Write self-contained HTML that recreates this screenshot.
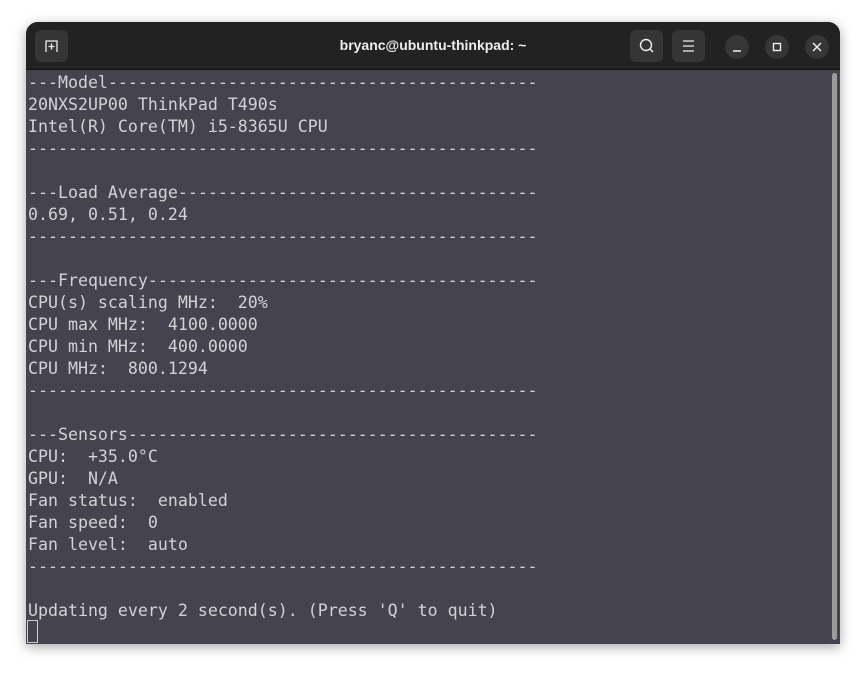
<!DOCTYPE html>
<html><head><style>
body{margin:0;width:866px;height:673px;background:#fff;position:relative;overflow:hidden}
.win{position:absolute;left:26px;top:22px;width:814px;height:622px;border-radius:12px 12px 0 0;overflow:hidden;box-shadow:0 3px 12px rgba(0,0,0,.35);background:#45434e}
.hdr{position:absolute;left:0;top:0;width:814px;height:47px;background:#222222;border-bottom:1px solid #111}
.title{position:absolute;left:0;width:814px;top:15px;text-align:center;color:#eee;font:bold 14px "Liberation Sans",sans-serif}
.btn{position:absolute;top:8px;width:33px;height:32px;background:#353535;border-radius:6px}
.cb{position:absolute;top:13px;width:24px;height:24px;background:#363636;border-radius:50%}
pre{position:absolute;left:2px;top:50px;margin:0;font:16.6px/22px "DejaVu Sans Mono","Liberation Mono",monospace;color:#d2d2d6}
.sb{position:absolute;left:806px;top:51px;width:5px;height:567px;background:#9b9b9b;border-radius:3px}
.cur{position:absolute;left:1px;top:598px;width:9px;height:21px;border:1px solid #d0d0d0}
</style></head><body>
<div class="win">
<div class="hdr">
<div class="btn" style="left:9px"><svg width="33" height="32"><path d="M11 22V11h11v11M13.5 16.5h6M16.5 13.5v6" stroke="#eee" stroke-width="1.3" fill="none"/></svg></div>
<div class="title">bryanc@ubuntu-thinkpad: ~</div>
<div class="btn" style="left:604px"><svg width="33" height="32"><circle cx="16" cy="15" r="5.5" stroke="#eee" stroke-width="1.4" fill="none"/><path d="M20 19l3 3" stroke="#eee" stroke-width="1.5"/></svg></div>
<div class="btn" style="left:646px"><svg width="33" height="32"><path d="M11 11h11M11 16h11M11 21h11" stroke="#eee" stroke-width="1.3"/></svg></div>
<div class="cb" style="left:699px"><svg width="24" height="24"><path d="M8 16h8" stroke="#eee" stroke-width="1.5"/></svg></div>
<div class="cb" style="left:739px"><svg width="24" height="24"><rect x="8.5" y="8.5" width="7" height="7" stroke="#eee" stroke-width="1.4" fill="none"/></svg></div>
<div class="cb" style="left:779px"><svg width="24" height="24"><path d="M8 8l8 8M16 8l-8 8" stroke="#eee" stroke-width="1.5"/></svg></div>
</div>
<pre>---Model-------------------------------------------
20NXS2UP00 ThinkPad T490s
Intel(R) Core(TM) i5-8365U CPU
---------------------------------------------------

---Load Average------------------------------------
0.69, 0.51, 0.24
---------------------------------------------------

---Frequency---------------------------------------
CPU(s) scaling MHz:  20%
CPU max MHz:  4100.0000
CPU min MHz:  400.0000
CPU MHz:  800.1294
---------------------------------------------------

---Sensors-----------------------------------------
CPU:  +35.0°C
GPU:  N/A
Fan status:  enabled
Fan speed:  0
Fan level:  auto
---------------------------------------------------

Updating every 2 second(s). (Press 'Q' to quit)</pre>
<div class="cur"></div>
<div class="sb"></div>
</div>
</body></html>
